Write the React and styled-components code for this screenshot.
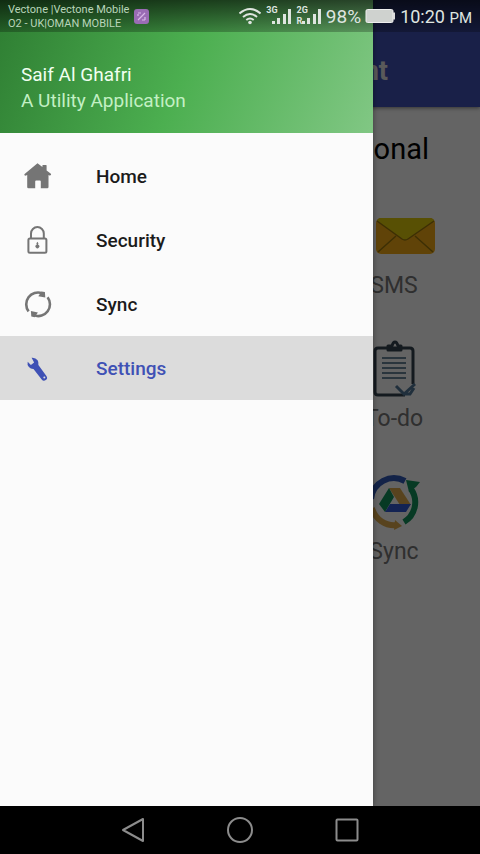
import React from "react";
import styled, { createGlobalStyle } from "styled-components";

const menuItems = [
  { label: "Home", Icon: HomeIcon },
  { label: "Security", Icon: LockIcon },
  { label: "Sync", Icon: SyncIcon },
  { label: "Settings", Icon: WrenchIcon, active: true },
];

const tiles = [
  { label: "SMS", Icon: EnvelopeIcon },
  { label: "To-do", Icon: ClipboardIcon },
  { label: "Sync", Icon: DriveIcon },
];

function HomeIcon() {
  return (
    <svg width="32" height="32" viewBox="0 0 32 32" aria-hidden="true">
      <path
        fill="currentColor"
        d="M15.5 3.2 20.4 7V5.6q0-.6.6-.6h3q.6 0 .6.6v4.8l4 3.2q.9.8.3 1.5t-1.4.4l-1-.6V27q0 1.2-1.2 1.2h-6.5v-6.7q0-1-1-1h-3.6q-1 0-1 1v6.7H6.5Q5.2 28.2 5.2 27V14.9l-1.2.6q-.9.4-1.5-.3t.4-1.5z"
      />
    </svg>
  );
}

function LockIcon() {
  return (
    <svg width="32" height="32" viewBox="0 0 32 32" aria-hidden="true">
      <g fill="none" stroke="currentColor" strokeWidth="2">
        <rect x="6.4" y="14.5" width="18" height="14.2" rx="1.5" />
        <path d="M9 14.5V9.5a6.4 6.4 0 0 1 12.8 0v5" />
      </g>
      <path
        fill="currentColor"
        d="M15.4 17.8l1 1.4-.3 1.5a1.9 1.9 0 1 1-1.4 0l-.3-1.5z"
      />
    </svg>
  );
}

function SyncIcon() {
  return (
    <svg width="32" height="32" viewBox="0 0 32 32" aria-hidden="true">
      <g fill="none" stroke="currentColor" strokeWidth="2.6">
        <path d="M6.6 23.4A11.8 11.8 0 0 1 20 5.2" />
        <path d="M25.6 9.2A11.8 11.8 0 0 1 12.2 27.4" />
      </g>
      <path
        fill="currentColor"
        d="M19.5 3.4l3.4.6.4 5.6-7-1.4zM12.7 29.2l-3.4-.6-.4-5.6 7 1.4z"
      />
    </svg>
  );
}

function WrenchIcon() {
  return (
    <svg width="32" height="32" viewBox="0 0 32 32" aria-hidden="true">
      <path
        fill="currentColor"
        fillRule="evenodd"
        d="M9.600 5.700q4-.4 6 2.600 1.300 2 .8 4.700l8 11a2.900 2.900 0 0 1-4.700 3.500l-8.200-10.500q-2.800.1-4.600-1.900-2-2.300-1.200-5.400l3.200 3.300 3.200-2.400zM22.300 24.400a1 1 0 1 0 .1 2 1 1 0 0 0-.1-2z"
      />
    </svg>
  );
}

function EnvelopeIcon() {
  return (
    <svg width="82" height="58" viewBox="0 0 82 58" aria-hidden="true">
      <rect x="23" y="11" width="59" height="36" rx="5" fill="#f0a914" />
      <path d="M28 11h49q4 1 4 3L55 32q-3 2-6 0L24 14q1-3 4-3z" fill="#dcc80a" />
      <path
        d="M24 14l25 18q3 2 6 0l26-18M25 45l18-16M80 45L62 29"
        fill="none"
        stroke="#98750c"
        strokeWidth="1.5"
      />
    </svg>
  );
}

function ClipboardIcon() {
  return (
    <svg width="58" height="58" viewBox="0 0 58 58" aria-hidden="true">
      <path
        d="M40 55H13q-3 0-3-3V11q0-3 3-3h32q3 0 3 3v33"
        fill="none"
        stroke="#34424f"
        strokeWidth="3"
      />
      <path
        d="M23 10V6h4q1-4 3-4t3 4h3v4z"
        fill="none"
        stroke="#34424f"
        strokeWidth="3"
        strokeLinejoin="round"
      />
      <path
        d="M17 18h24M17 23h24M17 28h24M17 33h24M17 38h24"
        stroke="#6a8599"
        strokeWidth="2"
      />
      <path
        d="M31 46l8 8 11-10M38 54h7l4-6"
        fill="none"
        stroke="#527797"
        strokeWidth="3"
      />
    </svg>
  );
}

function DriveIcon() {
  return (
    <svg width="58" height="58" viewBox="0 0 58 58" aria-hidden="true">
      <g fill="none" strokeWidth="6">
        <path d="M6 26A23 23 0 0 1 40 8" stroke="#3159b5" />
        <path d="M46 16A23 23 0 0 1 39 49" stroke="#12915a" />
        <path d="M32 52A23 23 0 0 1 7 35" stroke="#dba94c" />
      </g>
      <path d="M41 7l14 2-4 5-7 5z" fill="#12915a" />
      <path d="M30 47l7 6-8 4z" fill="#dba94c" />
      <path d="M24 15h11l11 17H35z" fill="#dba94c" />
      <path d="M24 15l5 9-9 15-6-8z" fill="#12915a" />
      <path d="M25 31h21l-5 8H20z" fill="#3159d0" />
    </svg>
  );
}

const WifiIcon = () => (
  <svg width="22" height="18" viewBox="1 0 22 18" aria-hidden="true">
    <g fill="none" stroke="currentColor" strokeWidth="2">
      <path d="M1.5 6.5q10.5-9 21 0" />
      <path d="M5 10q7-6 14 0" />
      <path d="M8.3 13q3.7-3 7.4 0" />
    </g>
    <circle cx="12" cy="15.5" r="1.8" fill="currentColor" />
  </svg>
);

const SignalIcon = ({ network, roaming }) => (
  <Signal>
    <SignalLabels>
      <span>{network}</span>
      {roaming && <span>R</span>}
    </SignalLabels>
    <svg width="20" height="18" viewBox="0 0 20 18" aria-hidden="true">
      <path
        fill="currentColor"
        d="M0 14h3v3H0zM5 11h3v6H5zM11 7h3v10h-3zM16 2h3v15h-3z"
      />
    </svg>
  </Signal>
);

const BatteryIcon = () => (
  <svg width="31" height="16" viewBox="0 0 31 16" aria-hidden="true">
    <rect x="1" y="1.5" width="27" height="13" rx="1.5" fill="#cfd2cf" stroke="#eee" />
    <path d="M28 4.5h2v7h-2z" fill="#ddd" />
  </svg>
);

const App = () => {
  return (
    <Screen>
      <GlobalStyle />
      <Stage>
        <Page>
          <AppBar>
            <h1>nt</h1>
          </AppBar>
          <h2>onal</h2>
          <TileGrid>
            {tiles.map(({ label, Icon }) => (
              <Tile key={label} type="button">
                <Icon />
                <span>{label}</span>
              </Tile>
            ))}
          </TileGrid>
        </Page>
        <Scrim />
        <Drawer>
          <DrawerHeader>
            <UserName>Saif Al Ghafri</UserName>
            <Tagline>A Utility Application</Tagline>
          </DrawerHeader>
          <Menu>
            {menuItems.map(({ label, Icon, active }) => (
              <li key={label}>
                <MenuLink href={`#${label.toLowerCase()}`} $active={active}>
                  <Icon />
                  <span>{label}</span>
                </MenuLink>
              </li>
            ))}
          </Menu>
        </Drawer>
        <StatusBar>
          <Carriers>
            <span>Vectone |Vectone Mobile</span>
            <span>O2 - UK|OMAN MOBILE</span>
          </Carriers>
          <Notification width="15" height="15" viewBox="0 0 15 15" aria-hidden="true">
            <rect width="15" height="15" rx="3" fill="#9a6cb4" />
            <path
              d="M4 4h3M11 4L4 11M8 11h3M4 5v2M11 8v3"
              stroke="#d9b9e8"
              strokeWidth="1.2"
            />
          </Notification>
          <WifiIcon />
          <SignalIcon network="3G" />
          <SignalIcon network="2G" roaming />
          <Percent>98%</Percent>
          <BatteryIcon />
          <Clock>
            10:20 <small>PM</small>
          </Clock>
        </StatusBar>
      </Stage>
      <NavBar>
        <button type="button" aria-label="Back">
          <svg width="28" height="28" viewBox="0 0 28 28">
            <path d="M4 14L24 3v22z" />
          </svg>
        </button>
        <button type="button" aria-label="Home">
          <svg width="28" height="28" viewBox="0 0 28 28">
            <circle cx="14" cy="14" r="12" />
          </svg>
        </button>
        <button type="button" aria-label="Recent apps">
          <svg width="28" height="28" viewBox="0 0 28 28">
            <rect x="3.5" y="3.5" width="21" height="21" rx="1" />
          </svg>
        </button>
      </NavBar>
    </Screen>
  );
};

const GlobalStyle = createGlobalStyle`
  * {
    box-sizing: border-box;
  }
  body {
    margin: 0;
    font-family: Roboto, "Liberation Sans", sans-serif;
  }
  h1,
  h2,
  p,
  ul {
    margin: 0;
    padding: 0;
  }
  button {
    border: none;
    background: transparent;
    font-family: inherit;
    padding: 0;
    cursor: pointer;
  }
  svg {
    display: block;
    flex: none;
  }
`;

const Screen = styled.div`
  display: flex;
  flex-direction: column;
  min-height: 100vh;
`;

const Stage = styled.div`
  position: relative;
  display: flex;
  flex: 1;
`;

const Page = styled.main`
  flex: 1;
  background: #fafafa;
  h2 {
    padding: 24px 51px 0 0;
    line-height: 36px;
    font-size: 29px;
    font-weight: 400;
    text-align: right;
    color: #000;
  }
`;

const AppBar = styled.header`
  display: flex;
  align-items: center;
  justify-content: flex-end;
  height: 107px;
  padding: 34px 92px 0 0;
  background: #3f51b5;
  box-shadow: 0 1px 4px rgba(0, 0, 0, 0.5);
  h1 {
    font-size: 27px;
    font-weight: 700;
    color: #e0e0e0;
  }
`;

const TileGrid = styled.section`
  display: grid;
  justify-content: end;
  gap: 38px;
  padding: 40px 26px 0 0;
`;

const Tile = styled.button`
  display: flex;
  flex-direction: column;
  align-items: center;
  gap: 5px;
  width: 120px;
  font-size: 23px;
  line-height: 32px;
  color: #757575;
`;

const Scrim = styled.div`
  position: absolute;
  inset: 0;
  background: rgba(0, 0, 0, 0.6);
`;

const Drawer = styled.aside`
  position: absolute;
  inset: 0 107px 0 0;
  background: #fbfbfb;
  box-shadow: 0 0 6px rgba(0, 0, 0, 0.4);
`;

const DrawerHeader = styled.header`
  display: flex;
  flex-direction: column;
  justify-content: flex-end;
  height: 133px;
  padding: 0 21px 19px;
  background: linear-gradient(112deg, #2e7d32, #4caf50 50%, #81c784);
  font-size: 19px;
  line-height: 26px;
`;

const UserName = styled.p`
  color: #f1fff1;
`;

const Tagline = styled.p`
  color: #c3f0c4;
`;

const Menu = styled.ul`
  padding-top: 11px;
  list-style: none;
`;

const MenuLink = styled.a`
  display: flex;
  align-items: center;
  gap: 42px;
  height: 64px;
  padding: 0 22px;
  font-size: 19px;
  font-weight: 500;
  text-decoration: none;
  color: ${({ $active }) => ($active ? "#3f51b5" : "#1b1b1b")};
  background: ${({ $active }) => ($active ? "#dcdcdc" : "transparent")};
  svg {
    color: ${({ $active }) => ($active ? "#3f51b5" : "#757575")};
  }
`;

const StatusBar = styled.div`
  position: absolute;
  inset: 0 0 auto;
  display: flex;
  align-items: center;
  height: 32px;
  padding: 0 8px;
  color: #dfe5e0;
  background: linear-gradient(rgba(0, 0, 0, 0.65), rgba(0, 0, 0, 0.25));
`;

const Carriers = styled.div`
  display: flex;
  flex-direction: column;
  padding-top: 2px;
  font-size: 11px;
  line-height: 14px;
  color: #b9d5ba;
`;

const Notification = styled.svg`
  margin: 0 auto 0 5px;
`;

const Signal = styled.div`
  display: flex;
  align-items: center;
  margin-left: 5px;
`;

const SignalLabels = styled.div`
  display: flex;
  flex-direction: column;
  justify-content: space-between;
  height: 20px;
  margin-right: -6px;
  font-size: 9px;
  font-weight: 700;
  line-height: 9px;
`;

const Percent = styled.span`
  margin: 0 4px;
  font-size: 19px;
`;

const Clock = styled.time`
  margin-left: 4px;
  font-size: 18px;
  small {
    font-size: 15px;
  }
`;

const NavBar = styled.nav`
  display: flex;
  align-items: center;
  justify-content: center;
  gap: 79px;
  height: 48px;
  background: #000;
  svg {
    fill: none;
    stroke: #8c8c8c;
    stroke-width: 2;
    stroke-linejoin: round;
  }
`;

export default App;
